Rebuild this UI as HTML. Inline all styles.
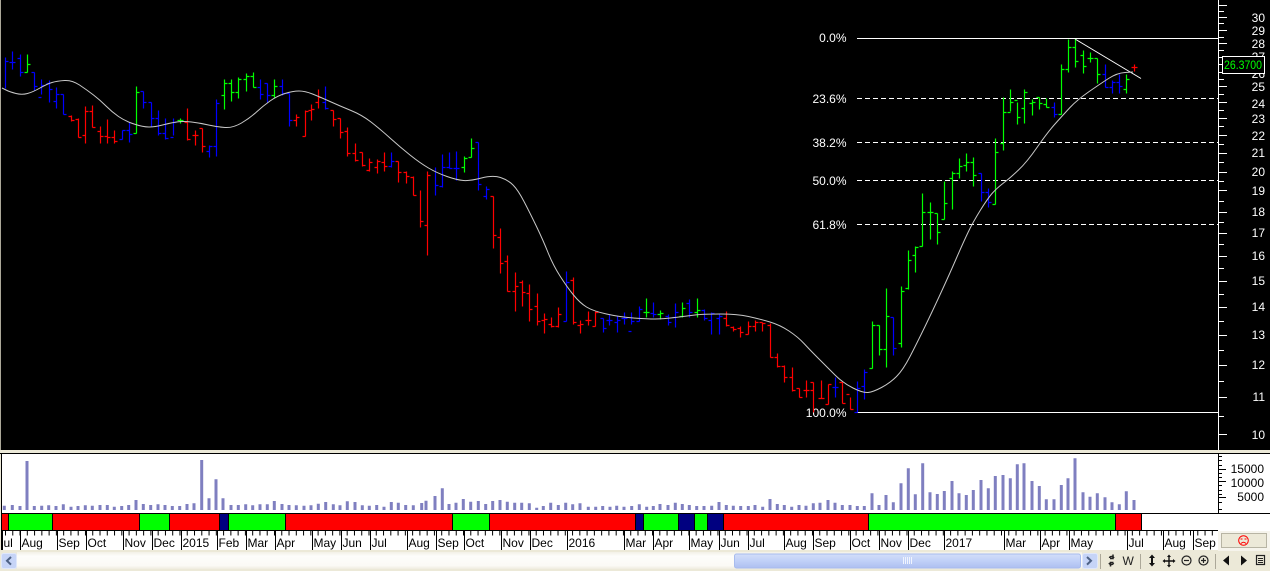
<!DOCTYPE html>
<html><head><meta charset="utf-8"><title>Chart</title>
<style>
html,body{margin:0;padding:0;background:#ece9d8;width:1270px;height:571px;overflow:hidden}
svg{display:block}
text{font-family:"Liberation Sans",sans-serif;font-size:12px}
</style></head><body>
<svg width="1270" height="571" viewBox="0 0 1270 571" xmlns="http://www.w3.org/2000/svg">
<defs>
<linearGradient id="trk" x1="0" y1="0" x2="0" y2="1"><stop offset="0" stop-color="#f3f1e7"/><stop offset=".25" stop-color="#fdfdfb"/><stop offset=".8" stop-color="#fbfaf5"/><stop offset="1" stop-color="#efecdf"/></linearGradient>
<linearGradient id="thm" x1="0" y1="0" x2="0" y2="1"><stop offset="0" stop-color="#d3def9"/><stop offset=".5" stop-color="#c0d0f8"/><stop offset="1" stop-color="#aebff0"/></linearGradient>
</defs>
<rect width="1270" height="571" fill="#ece9d8"/>
<rect x="1" y="0" width="1269" height="450" fill="#000"/>
<rect x="0" y="0" width="1" height="450" fill="#aca899"/>

<!-- fib lines -->
<g stroke="#fff" fill="none" stroke-width="1">
<path d="M857 38.5H1218M857 412.5H1218"/>
<path stroke-dasharray="5 3" d="M857 98.5H1218M857 142.5H1218M857 180.5H1218M857 224.5H1218"/>
<path d="M1075 39L1141 78.5"/>
</g>
<g fill="#fff" text-anchor="end">
<text x="846.5" y="42">0.0%</text>
<text x="846.5" y="103">23.6%</text>
<text x="846.5" y="147">38.2%</text>
<text x="846.5" y="185">50.0%</text>
<text x="846.5" y="229">61.8%</text>
<text x="846.5" y="417">100.0%</text>
</g>

<g transform="translate(0,.5)">
<!-- blue bars -->
<path fill="none" stroke="#0000ff" stroke-width="1.2" d="M5.5 57V88M5.5 61h3M12.5 51V69M12.5 62h-3M12.5 62h3M20.5 54V76M20.5 58h-3M20.5 72h3M34.5 72V90M34.5 72h-3M34.5 86h3M41.5 79V94M41.5 97h-3M41.5 85h3M49.5 80V102M49.5 83h-3M49.5 89h3M56.5 87V108M56.5 101h-3M56.5 94h3M63.5 94V114M63.5 94h-3M63.5 114h3M122.5 130V139M122.5 139h-3M122.5 130h3M129.5 122V142M129.5 130h-3M129.5 134h3M143.5 91V108M143.5 91h-3M143.5 102h3M151.5 102V126M151.5 102h-3M151.5 118h3M158.5 110V135M158.5 118h-3M158.5 133h3M165.5 118V139M165.5 133h-3M165.5 138h3M173.5 118V135M173.5 137h-3M173.5 122h3M209.5 145V157M209.5 151h-3M209.5 146h3M216.5 99V156M216.5 146h-3M216.5 103h3M260.5 79V99M260.5 87h-3M260.5 94h3M267.5 83V102M267.5 83h-3M267.5 95h3M282.5 79V95M282.5 86h-3M282.5 93h3M289.5 93V126M289.5 93h-3M289.5 120h3M325.5 86V109M325.5 102h-3M325.5 108h3M391.5 152V167M391.5 166h-3M391.5 161h3M435.5 167V195M435.5 185h3M442.5 154V187M442.5 186h-3M442.5 167h3M449.5 152V168M449.5 167h-3M449.5 168h3M456.5 151V180M456.5 168h-3M456.5 168h3M478.5 142V190M478.5 142h-3M478.5 184h3M486.5 186V199M486.5 196h-3M486.5 189h3M566.5 271V321M566.5 321h-3M566.5 282h3M603.5 318V332M603.5 318h-3M603.5 328h3M609.5 314V325M609.5 320h-3M609.5 320h3M617.5 316V332M617.5 322h-3M617.5 320h3M624.5 312V324M624.5 318h-3M624.5 318h3M631.5 312V324M631.5 331h-3M631.5 321h3M639.5 306V321M639.5 321h-3M639.5 309h3M653.5 302V317M653.5 313h-3M653.5 314h3M668.5 314V325M668.5 316h-3M668.5 322h3M675.5 303V327M675.5 317h-3M675.5 312h3M689.5 299V317M689.5 303h-3M689.5 312h3M704.5 309V320M704.5 310h-3M704.5 318h3M711.5 312V334M711.5 320h-3M711.5 313h3M719.5 313V334M719.5 318h-3M719.5 316h3M835.5 377V397M835.5 387h-3M835.5 387h3M857.5 381V412M857.5 412h-3M857.5 388h3M864.5 369V399M864.5 386h-3M864.5 372h3M893.5 317V355M893.5 317h-3M893.5 348h3M981.5 173V201M981.5 173h-3M981.5 192h3M988.5 188V207M988.5 192h-3M988.5 202h3M1054.5 102V117M1054.5 107h-3M1054.5 114h3M1105.5 64V87M1105.5 74h-3M1105.5 87h3M1112.5 80V93M1112.5 87h-3M1112.5 82h3M1119.5 74V93M1119.5 82h-3M1119.5 86h3"/>

<!-- red bars -->
<path fill="none" stroke="#ff0000" stroke-width="1.2" d="M71.5 115V121M71.5 116h-3M71.5 120h3M78.5 118V137M78.5 119h-3M78.5 137h3M85.5 106V143M85.5 135h-3M85.5 111h3M92.5 105V127M92.5 111h-3M92.5 127h3M100.5 126V143M100.5 131h-3M100.5 136h3M107.5 119V143M107.5 136h-3M107.5 137h3M114.5 130V143M114.5 137h-3M114.5 141h3M187.5 108V140M187.5 122h-3M187.5 139h3M195.5 130V145M195.5 135h-3M195.5 135h3M202.5 128V152M202.5 128h-3M202.5 146h3M296.5 114V126M296.5 120h-3M296.5 117h3M305.5 110V136M305.5 136h-3M305.5 111h3M311.5 104V120M311.5 110h-3M311.5 109h3M318.5 89V108M318.5 102h-3M318.5 97h3M333.5 110V126M333.5 110h-3M333.5 119h3M340.5 118V138M340.5 118h-3M340.5 132h3M347.5 127V156M347.5 131h-3M347.5 153h3M355.5 143V161M355.5 153h-3M355.5 160h3M362.5 152V166M362.5 152h-3M362.5 165h3M369.5 158V171M369.5 170h-3M369.5 162h3M377.5 159V173M377.5 167h-3M377.5 161h3M384.5 152V171M384.5 162h-3M384.5 166h3M398.5 161V182M398.5 161h-3M398.5 172h3M406.5 171V183M406.5 172h-3M406.5 176h3M413.5 176V195M413.5 177h-3M413.5 195h3M420.5 190V227M420.5 221h3M427.5 171V255M427.5 225h-3M427.5 175h3M493.5 196V248M493.5 196h-3M493.5 235h3M500.5 228V273M500.5 237h-3M500.5 263h3M507.5 255V291M507.5 261h-3M507.5 291h3M515.5 272V311M515.5 291h-3M515.5 286h3M522.5 280V306M522.5 282h-3M522.5 292h3M529.5 284V321M529.5 293h-3M529.5 309h3M537.5 293V325M537.5 306h-3M537.5 321h3M544.5 313V333M544.5 320h-3M544.5 319h3M551.5 317V327M551.5 324h-3M551.5 326h3M558.5 307V327M558.5 326h-3M558.5 314h3M573.5 277V324M573.5 280h-3M573.5 322h3M580.5 320V333M580.5 325h-3M580.5 324h3M588.5 311V325M588.5 320h-3M588.5 320h3M595.5 311V326M595.5 326h-3M595.5 312h3M726.5 311V326M726.5 318h-3M726.5 325h3M733.5 326V331M733.5 327h-3M733.5 329h3M740.5 326V337M740.5 328h-3M740.5 332h3M748.5 321V334M748.5 334h-3M748.5 326h3M755.5 320V331M755.5 326h-3M755.5 322h3M762.5 322V331M762.5 322h-3M762.5 323h3M770.5 323V357M770.5 325h-3M770.5 357h3M777.5 353V367M777.5 357h-3M777.5 366h3M784.5 365V382M784.5 366h-3M784.5 377h3M792.5 367V391M792.5 377h-3M792.5 390h3M799.5 388V397M799.5 388h-3M799.5 397h3M806.5 380V397M806.5 390h-3M806.5 390h3M813.5 382V412M813.5 382h-3M813.5 390h-3M821.5 380V398M821.5 398h-3M821.5 398h3M828.5 384V404M828.5 404h-3M828.5 384h3M842.5 381V403M842.5 382h-3M842.5 403h3M850.5 397V409M849.5 394h-3M850.5 409h3M1134.5 64V71M1134.5 67h-3M1134.5 67h3"/>

<!-- green bars -->
<path fill="none" stroke="#00ff00" stroke-width="1.2" d="M27.5 54V72M27.5 72h-3M27.5 64h3M136.5 86V133M136.5 133h-3M136.5 92h3M180.5 118V123M180.5 120h-3M180.5 120h3M224.5 79V109M224.5 95h-3M224.5 83h3M231.5 79V101M231.5 83h-3M231.5 92h3M238.5 77V98M238.5 92h-3M238.5 79h3M246.5 73V91M246.5 79h-3M246.5 76h3M253.5 72V87M253.5 76h-3M253.5 87h3M274.5 79V98M274.5 95h-3M274.5 86h3M464.5 156V172M464.5 167h-3M464.5 158h3M471.5 138V157M471.5 157h-3M471.5 148h3M646.5 298V317M646.5 312h-3M646.5 312h3M660.5 310V319M660.5 314h-3M660.5 313h3M682.5 302V317M682.5 316h-3M682.5 308h3M697.5 298V317M697.5 312h-3M697.5 310h3M872.5 321V368M872.5 368h-3M872.5 325h3M879.5 325V355M879.5 325h-3M879.5 349h3M886.5 288V367M886.5 349h-3M886.5 316h3M901.5 286V347M901.5 343h-3M901.5 291h3M908.5 250V289M908.5 288h-3M908.5 260h3M915.5 246V272M915.5 255h-3M915.5 247h3M922.5 193V246M922.5 246h-3M922.5 212h3M930.5 202V239M930.5 212h-3M930.5 212h3M937.5 213V244M937.5 213h-3M937.5 232h3M944.5 181V219M944.5 219h-3M944.5 203h3M952.5 171V209M952.5 178h-3M952.5 173h3M959.5 158V178M959.5 173h-3M959.5 166h3M966.5 153V171M966.5 165h-3M966.5 162h3M973.5 157V186M973.5 162h-3M973.5 175h3M995.5 138V204M995.5 204h-3M995.5 152h3M1003.5 97V150M1003.5 143h-3M1003.5 112h3M1010.5 89V111M1010.5 112h-3M1010.5 102h3M1017.5 102V124M1017.5 100h-3M1017.5 117h3M1024.5 89V123M1024.5 108h-3M1024.5 92h3M1032.5 99V115M1032.5 103h-3M1032.5 102h3M1039.5 97V109M1039.5 97h-3M1039.5 103h3M1046.5 98V107M1046.5 104h-3M1046.5 107h3M1061.5 64V114M1061.5 114h-3M1061.5 69h3M1068.5 39V72M1068.5 69h-3M1068.5 47h3M1075.5 39V67M1075.5 47h-3M1075.5 61h3M1083.5 50V73M1083.5 55h-3M1083.5 66h3M1090.5 52V62M1090.5 58h-3M1090.5 58h3M1097.5 58V83M1097.5 58h-3M1097.5 74h3M1126.5 74V93M1126.5 89h-3M1126.5 79h3"/>
</g>

<!-- moving average -->
<path fill="none" stroke="#c8c8c8" stroke-width="1" stroke-linejoin="round" d="M2 88L6 90Q10 92 16 93.500Q22 95 27.500 93.500Q33 92 40 88Q47 84 52 82.500Q57 81 64.500 80.500Q72 80 79.500 85Q87 90 93.500 95Q100 100 106 106Q112 112 118.500 116.500Q125 121 134 124Q143 127 149 127Q155 127 162.500 125Q170 123 176.500 122Q183 121 191.500 122Q200 123 208.500 125Q217 127 225 127.500Q233 128 241.500 123Q250 118 256.500 112Q263 106 270 101Q277 96 285 93.500Q293 91 299 91Q305 91 312.500 94Q320 97 330 101.500Q340 106 351 110.500Q362 115 371 122Q380 129 390 138Q400 147 410 155Q420 163 428.500 168Q437 173 447 176.500Q457 180 463.500 180.500Q470 181 481.500 178Q493 175 500.500 177.500Q508 180 513 185Q518 190 524 201.500Q530 213 536.500 226.500Q543 240 548 252.500Q553 265 560 276Q567 287 573.500 295Q580 303 586.500 307Q593 311 606.500 314Q620 317 633.500 318Q647 319 655 319Q663 319 675 317.500Q687 316 695 315Q703 314 720 314Q737 314 748.500 316.500Q760 319 770 322Q780 325 789 331Q798 337 804 343.500Q810 350 818.500 358.500Q827 367 835 375Q843 383 853 388Q863 393 868 392.500Q873 392 881.500 387.500Q890 383 896.500 376.500Q903 370 910 356.500Q917 343 925 326.500Q933 310 941.500 291.500Q950 273 956.500 258Q963 243 968 232.500Q973 222 980.500 210Q988 198 992.500 193Q997 188 1003.500 183Q1010 178 1018.500 170Q1027 162 1037 147.500Q1047 133 1055 124Q1063 115 1070 107.500Q1077 100 1088.500 92Q1100 84 1108.500 78.500Q1117 73 1125 72.500L1133 72"/>

<!-- price axis -->
<path stroke="#fff" stroke-width="1" fill="none" d="M1218.5 0V450M1218 5.5h9M1218 11.5h6M1218 17.5h9M1218 23.5h6M1218 30.5h9M1218 37.5h6M1218 43.5h9M1218 50.5h6M1218 57.5h9M1218 64.5h6M1218 72.5h9M1218 79.5h6M1218 86.5h9M1218 94.5h6M1218 102.5h9M1218 110.5h6M1218 118.5h9M1218 126.5h6M1218 135.5h9M1218 144.5h6M1218 153.5h9M1218 162.5h6M1218 172.5h9M1218 181.5h6M1218 190.5h9M1218 201.5h6M1218 212.5h9M1218 222.5h6M1218 233.5h9M1218 244.5h6M1218 256.5h9M1218 268.5h6M1218 281.5h9M1218 294.5h6M1218 307.5h9M1218 321.5h6M1218 335.5h9M1218 350.5h6M1218 365.5h9M1218 381.5h6M1218 397.5h9M1218 416.5h6M1218 434.5h9"/>
<g fill="#fff" text-anchor="end">
<text x="1265" y="22">30</text><text x="1265" y="35">29</text><text x="1265" y="48">28</text><text x="1265" y="61">27</text><text x="1265" y="78">26</text><text x="1265" y="91">25</text><text x="1265" y="108">24</text><text x="1265" y="123">23</text><text x="1265" y="140">22</text><text x="1265" y="157">21</text><text x="1265" y="176">20</text><text x="1265" y="195">19</text><text x="1265" y="216">18</text><text x="1265" y="237">17</text><text x="1265" y="260">16</text><text x="1265" y="285">15</text><text x="1265" y="311">14</text><text x="1265" y="339">13</text><text x="1265" y="369">12</text><text x="1265" y="401">11</text><text x="1265" y="439">10</text>
</g>
<rect x="1222.5" y="56.5" width="42" height="17" fill="#000" stroke="#fff"/>
<text x="1224" y="69" fill="#00ff00" textLength="38" lengthAdjust="spacingAndGlyphs">26.3700</text>

<!-- volume panel -->
<rect x="0" y="453" width="1270" height="1" fill="#000"/>
<rect x="2" y="454" width="1268" height="59" fill="#fff"/>
<rect x="1" y="453" width="1" height="97" fill="#000"/>
<path fill="none" stroke="#7f7fc0" stroke-width="3" d="M4.3 505.7V510M12.3 505V510M20 506V510M27 461V510M34.3 506V510M41.7 505.7V510M48.7 505.3V510M56 506V510M63.3 504.3V510M71 506.7V510M78 506V510M85.3 505.3V510M92.3 505.7V510M100 505V510M107.3 505V510M114.3 506.7V510M121.7 506V510M128.7 505V510M136 500V510M143.3 504V510M150.7 505V510M158 504.3V510M165 505V510M172.3 506V510M179.7 506V510M187 504V510M194 503.3V510M201.7 460V510M209 498.3V510M216 479.3V510M223 498.3V510M231 505V510M238.3 505V510M245.7 504.3V510M252.7 505.3V510M260 504.3V510M267.3 504.3V510M274.3 501V510M282 504V510M289 505V510M296.3 505.3V510M304 505.7V510M311 505.3V510M318.3 503.7V510M325.7 502V510M333.3 504.3V510M340 505.3V510M347.3 501.3V510M355 502V510M362.3 505.3V510M369.3 505.7V510M376.7 505V510M384 506.7V510M391.3 502V510M398.3 502.7V510M405.7 505V510M413.3 505.3V510M421.7 503V510M426 500.7V510M435 496V510M442.3 488.3V510M449 504V510M456 502.7V510M463.3 499V510M470.7 501.7V510M478.3 501V510M485.7 504V510M492.7 501V510M500 500V510M507.3 501.7V510M514.7 502.7V510M521.7 502.7V510M529.3 503.3V510M536.7 507.7V510M543.3 506V510M550.7 502.7V510M558.3 505V510M565.7 502.7V510M572.7 504.3V510M580 503.3V510M588.3 506.7V510M595.7 506.7V510M602.7 506V510M610 506.7V510M616.7 505.7V510M624 506.7V510M631.7 506V510M639.3 504.3V510M646.7 506.7V510M653.3 506V510M660 504V510M668 505V510M675.3 502.7V510M682.3 504V510M689.3 505V510M696.7 506V510M704 506V510M711.7 505.7V510M719 502V510M726.3 505V510M733.3 505.7V510M740.7 506V510M748.3 506V510M755 505V510M762.7 506.7V510M770 499V510M777.3 504V510M784.3 505V510M791.7 506.7V510M799 505V510M806 505.7V510M813.3 503.3V510M820 502.7V510M828 500V510M835 502.7V510M842.3 505V510M850 505V510M857.3 506V510M864.3 506V510M872 493.3V510M879 505V510M886 495V510M893.3 502.3V510M901 483.3V510M908.3 468.3V510M915.3 494.3V510M922.7 463.3V510M930 492.3V510M937.3 494V510M944.3 491V510M952 481V510M959 493.3V510M966.3 495V510M973.3 490V510M981 480V510M988.3 488.3V510M995.3 476V510M1003 475V510M1010.3 478.3V510M1017.3 464.3V510M1024 463.3V510M1032 481V510M1039.3 486V510M1046.3 499.3V510M1054 499.3V510M1061.3 485V510M1068 478.3V510M1075 458.3V510M1083 492.3V510M1090 496.7V510M1097.3 493.3V510M1105 497.3V510M1112 502.3V510M1119.3 504.3V510M1126.3 491.3V510M1134 500V510"/>
<path stroke="#000" stroke-width="1" fill="none" d="M1218.5 454V513M1218 456.5h4M1218 460.5h4M1218 465.5h4M1218 469.5h8M1218 473.5h4M1218 477.5h4M1218 481.5h8M1218 485.5h4M1218 490.5h4M1218 494.5h4M1218 497.5h8M1218 502.5h4M1218 509.5h4"/>
<g fill="#000" text-anchor="end">
<text x="1264" y="473">15000</text><text x="1264" y="487">10000</text><text x="1264" y="501">5000</text>
</g>

<!-- colour strip -->
<rect x="2" y="513" width="1268" height="18" fill="#fff"/>
<rect x="2" y="513" width="6" height="17" fill="#ff0000"/>
<rect x="8" y="513" width="44" height="17" fill="#00ff00"/>
<rect x="52" y="513" width="87" height="17" fill="#ff0000"/>
<rect x="139" y="513" width="30" height="17" fill="#00ff00"/>
<rect x="169" y="513" width="50" height="17" fill="#ff0000"/>
<rect x="219" y="513" width="9" height="17" fill="#000080"/>
<rect x="228" y="513" width="57" height="17" fill="#00ff00"/>
<rect x="285" y="513" width="167" height="17" fill="#ff0000"/>
<rect x="452" y="513" width="37" height="17" fill="#00ff00"/>
<rect x="489" y="513" width="146" height="17" fill="#ff0000"/>
<rect x="635" y="513" width="8" height="17" fill="#000080"/>
<rect x="643" y="513" width="35" height="17" fill="#00ff00"/>
<rect x="678" y="513" width="16" height="17" fill="#000080"/>
<rect x="694" y="513" width="13" height="17" fill="#00ff00"/>
<rect x="707" y="513" width="16" height="17" fill="#000080"/>
<rect x="723" y="513" width="145" height="17" fill="#ff0000"/>
<rect x="868" y="513" width="247" height="17" fill="#00ff00"/>
<rect x="1115" y="513" width="27" height="17" fill="#ff0000"/>
<path stroke="#000" stroke-width="1" fill="none" d="M2 513.5H1270M2 530.5H1218M8.5 513V530M52.5 513V530M139.5 513V530M169.5 513V530M219.5 513V530M228.5 513V530M285.5 513V530M452.5 513V530M489.5 513V530M635.5 513V530M643.5 513V530M678.5 513V530M694.5 513V530M707.5 513V530M723.5 513V530M868.5 513V530M1115.5 513V530M1141.5 513V530"/>

<!-- time axis -->
<rect x="2" y="531" width="1216" height="19" fill="#fff"/>
<path stroke="#000" stroke-width="5" stroke-dasharray="1 6.27" fill="none" d="M5 533H1218"/>
<path stroke="#000" stroke-width="1" fill="none" d="M2.5 531V550M20.5 531V550M57.5 531V550M86.5 531V550M123.5 531V550M152.5 531V550M181.5 531V550M217.5 531V550M246.5 531V550M275.5 531V550M312.5 531V550M341.5 531V550M370.5 531V550M407.5 531V550M436.5 531V550M464.5 531V550M501.5 531V550M530.5 531V550M567.5 531V550M624.5 531V550M653.5 531V550M689.5 531V550M719.5 531V550M748.5 531V550M784.5 531V550M813.5 531V550M850.5 531V550M879.5 531V550M908.5 531V550M944.5 531V550M1004.5 531V550M1040.5 531V550M1069.5 531V550M1127.5 531V550M1163.5 531V550M1193.5 531V550"/>
<g fill="#000">
<text x="3.5" y="547">ul</text><text x="21.5" y="547">Aug</text><text x="58.5" y="547">Sep</text><text x="87.5" y="547">Oct</text><text x="124.5" y="547">Nov</text><text x="153.5" y="547">Dec</text><text x="182.5" y="547">2015</text><text x="218.5" y="547">Feb</text><text x="247.5" y="547">Mar</text><text x="276.5" y="547">Apr</text><text x="313.5" y="547">May</text><text x="342.5" y="547">Jun</text><text x="371.5" y="547">Jul</text><text x="408.5" y="547">Aug</text><text x="437.5" y="547">Sep</text><text x="465.5" y="547">Oct</text><text x="502.5" y="547">Nov</text><text x="531.5" y="547">Dec</text><text x="568.5" y="547">2016</text><text x="625.5" y="547">Mar</text><text x="654.5" y="547">Apr</text><text x="690.5" y="547">May</text><text x="720.5" y="547">Jun</text><text x="749.5" y="547">Jul</text><text x="785.5" y="547">Aug</text><text x="814.5" y="547">Sep</text><text x="851.5" y="547">Oct</text><text x="880.5" y="547">Nov</text><text x="909.5" y="547">Dec</text><text x="945.5" y="547">2017</text><text x="1005.5" y="547">Mar</text><text x="1041.5" y="547">Apr</text><text x="1070.5" y="547">May</text><text x="1128.5" y="547">Jul</text><text x="1164.5" y="547">Aug</text><text x="1194.5" y="547">Sep</text>
</g>

<!-- status box -->
<rect x="1218" y="531" width="52" height="20" fill="#f6f4ec"/>
<rect x="1221.5" y="533.5" width="45" height="14" fill="#ece9d8" stroke="#b8b5a4"/>
<g fill="none" stroke="#ff0000" stroke-width="1">
<circle cx="1243.5" cy="540.5" r="4.8"/>
<path d="M1240.5 539h2M1244.5 539h2M1241 543.5q2.500-2.500 5 0"/>
</g>

<!-- scrollbar -->
<rect x="0" y="551" width="1098" height="20" fill="#ece9d8"/>
<rect x="17" y="552" width="1065" height="17" fill="url(#trk)"/>
<rect x="1.5" y="553.5" width="15" height="15" rx="2" fill="#c6d4f7" stroke="#dfe7fb"/>
<path d="M11 557l-4 3.800 4 3.800" fill="none" stroke="#4d6185" stroke-width="2"/>
<rect x="734.5" y="554" width="346" height="14" rx="2" fill="url(#thm)" stroke="#a8bcee"/>
<path stroke="#f0f4fe" stroke-width="1" d="M903.500 557v7M905.500 557v7M907.500 557v7M909.500 557v7M911.500 557v7"/>
<rect x="1082.5" y="553.5" width="15" height="15" rx="2" fill="#c6d4f7" stroke="#dfe7fb"/>
<path d="M1087 557l4 3.800-4 3.800" fill="none" stroke="#4d6185" stroke-width="2"/>

<!-- toolbar -->
<path stroke="#aca899" stroke-width="1" d="M1100.500 554v15M1140.500 554v15M1215.500 554v15"/>
<g fill="none" stroke="#222">
<path stroke-width="1.500" d="M1114 558c-1-2-4-2-4.500 0M1109 563c1 2 4 2 4.500 0M1113 554.500v4h-3M1110.500 566.500v-4h3"/>
</g>
<text x="1122.500" y="565" fill="#222" style="font-size:12px">W</text>
<path fill="#111" d="M1152 554.500l3 3.500h-2v5h2l-3 3.500-3-3.500h2v-5h-2z"/>
<path fill="#111" d="M1169 554.500l2 2.500h-1.300v3.300h3.300V559l2.500 2-2.500 2v-1.300h-3.300v3.300h1.300l-2 2.500-2-2.500h1.300v-3.300h-3.300V563l-2.500-2 2.500-2v1.300h3.300V557h-1.300z"/>
<g fill="none" stroke="#222" stroke-width="1.200">
<circle cx="1186.500" cy="560.500" r="4.500"/><path d="M1184 560.500h5"/>
<circle cx="1203.500" cy="560.500" r="4.500"/><path d="M1201 560.500h5M1203.500 558v5"/>
</g>
<path fill="#111" d="M1229 555.500v10l-6-5zM1241 555.500v10l6-5z"/>
<rect x="1256.500" y="555.500" width="8" height="9" fill="none" stroke="#222" stroke-width="1.200"/>
<path stroke="#222" stroke-width="1" d="M1258 558.500h5M1258 560.500h5M1258 562.500h5"/>
</svg>
</body></html>
